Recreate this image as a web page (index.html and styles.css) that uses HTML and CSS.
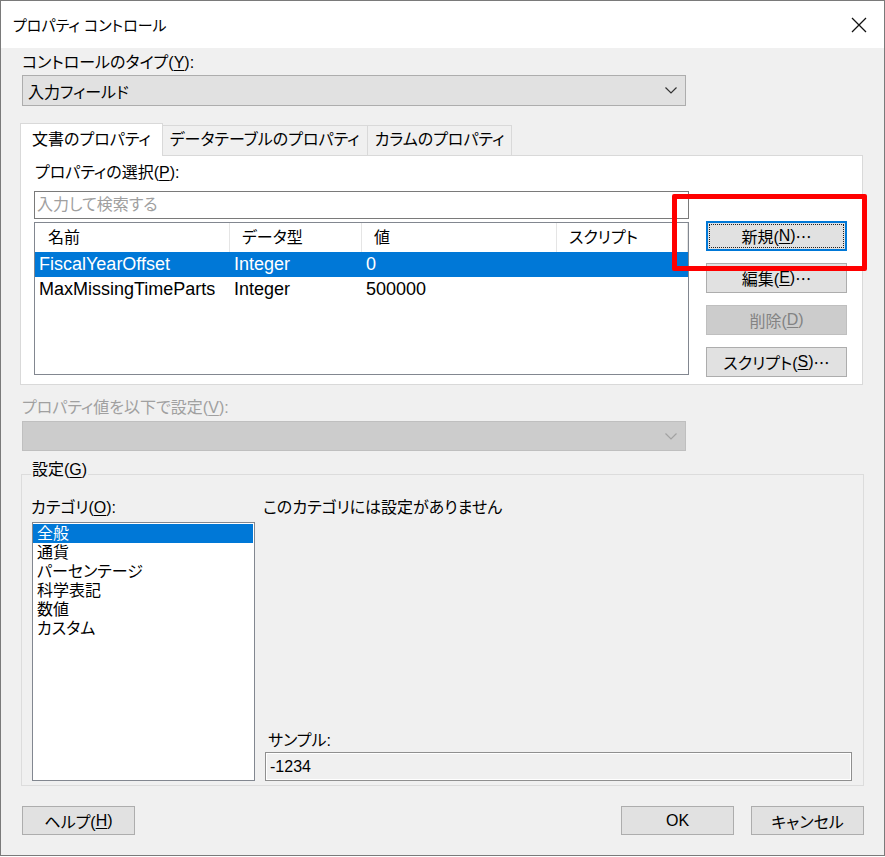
FILE: index.html
```html
<!DOCTYPE html>
<html lang="ja">
<head>
<meta charset="utf-8">
<title>プロパティ コントロール</title>
<link rel="stylesheet" href="styles.css">
</head>
<body>
<div class="window">
  <div class="titlebar">
    <span class="title">プロパティ コントロール</span>
    <svg class="close" width="16" height="16" viewBox="0 0 16 16"><path d="M1 1 L15 15 M15 1 L1 15" stroke="#111" stroke-width="1.3" fill="none"/></svg>
  </div>
  <div class="content">
    <div class="label">コントロールのタイプ(<u>Y</u>):</div>
    <div class="combo">
      <span>入力フィールド</span>
      <svg width="12" height="7" viewBox="0 0 12 7"><path d="M0.5 0.5 L6 6 L11.5 0.5" stroke="#333" stroke-width="1.2" fill="none"/></svg>
    </div>
    <div class="tabs">
      <div class="tab active">文書のプロパティ</div>
      <div class="tab">データテーブルのプロパティ</div>
      <div class="tab">カラムのプロパティ</div>
    </div>
    <div class="panel">
      <div class="panel-left">
        <div class="label label-p">プロパティの選択(<u>P</u>):</div>
        <div class="search">入力して検索する</div>
        <div class="listview">
          <div class="lv-header">
            <div class="lv-h">名前</div>
            <div class="lv-h">データ型</div>
            <div class="lv-h">値</div>
            <div class="lv-h">スクリプト</div>
          </div>
          <div class="lv-row selected">
            <div class="lv-c">FiscalYearOffset</div>
            <div class="lv-c">Integer</div>
            <div class="lv-c">0</div>
            <div class="lv-c"></div>
          </div>
          <div class="lv-row">
            <div class="lv-c">MaxMissingTimeParts</div>
            <div class="lv-c">Integer</div>
            <div class="lv-c">500000</div>
            <div class="lv-c"></div>
          </div>
        </div>
      </div>
      <div class="panel-buttons">
        <div class="btn focused">新規(<u>N</u>)<span class="ell">…</span></div>
        <div class="btn">編集(<u>E</u>)<span class="ell">…</span></div>
        <div class="btn disabled">削除(<u>D</u>)</div>
        <div class="btn">スクリプト(<u>S</u>)<span class="ell">…</span></div>
      </div>
    </div>
    <div class="label label-dis">プロパティ値を以下で設定(<u>V</u>):</div>
    <div class="combo combo-dis">
      <span></span>
      <svg width="12" height="7" viewBox="0 0 12 7"><path d="M0.5 0.5 L6 6 L11.5 0.5" stroke="#a2a2a2" stroke-width="1.2" fill="none"/></svg>
    </div>
    <div class="group">
      <span class="legend">設定(<u>G</u>)</span>
      <div class="group-left">
        <div class="label">カテゴリ(<u>O</u>):</div>
        <div class="listbox">
          <div class="lb-item selected">全般</div>
          <div class="lb-item">通貨</div>
          <div class="lb-item">パーセンテージ</div>
          <div class="lb-item">科学表記</div>
          <div class="lb-item">数値</div>
          <div class="lb-item">カスタム</div>
        </div>
      </div>
      <div class="group-right">
        <div class="label">このカテゴリには設定がありません</div>
        <div class="sample">
          <div class="label">サンプル:</div>
          <div class="sample-box">-1234</div>
        </div>
      </div>
    </div>
    <div class="footer">
      <div class="btn btn-foot">ヘルプ(<u>H</u>)</div>
      <div class="footer-right">
        <div class="btn btn-foot">OK</div>
        <div class="btn btn-foot">キャンセル</div>
      </div>
    </div>
  </div>
  <div class="highlight"></div>
</div>
</body>
</html>
```

FILE: styles.css
```css
* { box-sizing: border-box; }
html, body { margin: 0; padding: 0; background: #ffffff; }
body {
  font-family: "Liberation Sans", "Noto Sans CJK JP", sans-serif;
  font-size: 16px;
  font-feature-settings: "palt";
  color: #000;
}
u { text-underline-offset: 2px; }
.window {
  position: relative;
  width: 885px;
  height: 856px;
  border: 1px solid #7a7a7a;
  background: #f0f0f0;
}
.titlebar {
  height: 47px;
  background: #ffffff;
  display: flex;
  align-items: center;
  justify-content: space-between;
  padding: 0 17px 0 12px;
}
.title { font-size: 15px; }
.content { padding: 0 20px 0 19px; }
.label { height: 20px; line-height: 20px; white-space: nowrap; }
.content > .label:first-child { margin-top: 5px; margin-left: 2px; }
.combo {
  margin-top: 2px;
  margin-left: 2px;
  width: 664px;
  height: 31px;
  background: #e1e1e1;
  border: 1px solid #adadad;
  display: flex;
  align-items: center;
  justify-content: space-between;
  padding: 0 8px 0 5px;
}
.tabs {
  margin-top: 17px;
  height: 32px;
  display: flex;
  align-items: flex-end;
  position: relative;
  z-index: 1;
}
.tab {
  height: 30px;
  line-height: 28px;
  padding: 0 7px;
  border: 1px solid #d9d9d9;
  border-bottom: none;
  background: #f0f0f0;
  margin-left: -1px;
  white-space: nowrap;
}
.tab.active {
  height: 33px;
  margin-bottom: -1px;
  margin-left: 0;
  background: #ffffff;
  padding: 0 11px 0 11px;
  line-height: 32px;
}
.panel {
  width: 843px;
  height: 230px;
  background: #ffffff;
  border: 1px solid #d9d9d9;
  display: flex;
  gap: 17px;
  padding-left: 13px;
}
.panel-left { width: 655px; }
.label-p { margin-top: 7px; margin-left: 1px; }
.search {
  margin-top: 8px;
  height: 28px;
  border: 1px solid #7a7a7a;
  color: #a0a0a0;
  line-height: 26px;
  padding-left: 2px;
  background: #fff;
}
.listview {
  margin-top: 3px;
  height: 153px;
  border: 1px solid #828790;
  background: #fff;
}
.lv-header, .lv-row {
  display: grid;
  grid-template-columns: 195px 132px 195px 1fr;
}
.lv-header { height: 29px; }
.lv-h {
  border-right: 1px solid #e5e5e5;
  line-height: 29px;
  padding-left: 12px;
  white-space: nowrap;
}
.lv-h:first-child { padding-left: 13px; }
.lv-row { height: 25px; }
.lv-c { line-height: 25px; padding-left: 4px; white-space: nowrap; font-size: 18px; }
.lv-row.selected { background: #0078d7; color: #fff; }
.panel-buttons {
  width: 141px;
  padding-top: 65px;
  display: flex;
  flex-direction: column;
  gap: 12px;
}
.btn {
  height: 30px;
  background: #e1e1e1;
  border: 1px solid #adadad;
  display: flex;
  align-items: center;
  justify-content: center;
  white-space: nowrap;
}
.btn.focused {
  border: 2px solid #0078d7;
  outline: 1px dotted #222;
  outline-offset: -4px;
}
.btn.disabled { background: #cccccc; border-color: #bfbfbf; color: #838383; }
.ell { font-family: "Noto Sans CJK JP", sans-serif; font-feature-settings: normal; }
.label-dis { margin-top: 13px; margin-left: 2px; color: #a0a0a0; }
.combo-dis { margin-top: 3px; height: 30px; background: #cccccc; border-color: #bfbfbf; }
.group {
  position: relative;
  margin-top: 23px;
  margin-left: 1px;
  width: 843px;
  height: 312px;
  border: 1px solid #dcdcdc;
  padding: 23px 11px 4px 9px;
  display: flex;
  gap: 10px;
}
.legend {
  position: absolute;
  top: -15px;
  left: 9px;
  background: #f0f0f0;
  padding: 0 1px;
  line-height: 20px;
}
.group-left { width: 224px; }
.listbox {
  margin-top: 4px;
  margin-left: 1px;
  width: 223px;
  height: 259px;
  border: 1px solid #828790;
  background: #fff;
  padding-top: 1px;
}
.lb-item { height: 19px; line-height: 19px; padding-left: 4px; }
.lb-item.selected { background: #0078d7; color: #fff; margin-right: 1px; }
.group-right {
  width: 587px;
  display: flex;
  flex-direction: column;
  justify-content: space-between;
}
.group-right > .label { margin-left: -2px; }
.sample .label { margin-left: 3px; }
.sample-box {
  margin-top: 1px;
  height: 29px;
  border: 1px solid #8f8f8f;
  box-shadow: inset 0 0 0 1px #ffffff;
  background: #f0f0f0;
  line-height: 27px;
  padding-left: 4px;
}
.footer {
  margin-top: 20px;
  display: flex;
  justify-content: space-between;
  padding-left: 2px;
}
.footer-right { display: flex; gap: 17px; }
.btn-foot { width: 113px; height: 29px; }
.highlight {
  position: absolute;
  left: 671px;
  top: 193px;
  width: 195px;
  height: 77px;
  border: 5px solid #ff0000;
  border-radius: 2px;
}
```
